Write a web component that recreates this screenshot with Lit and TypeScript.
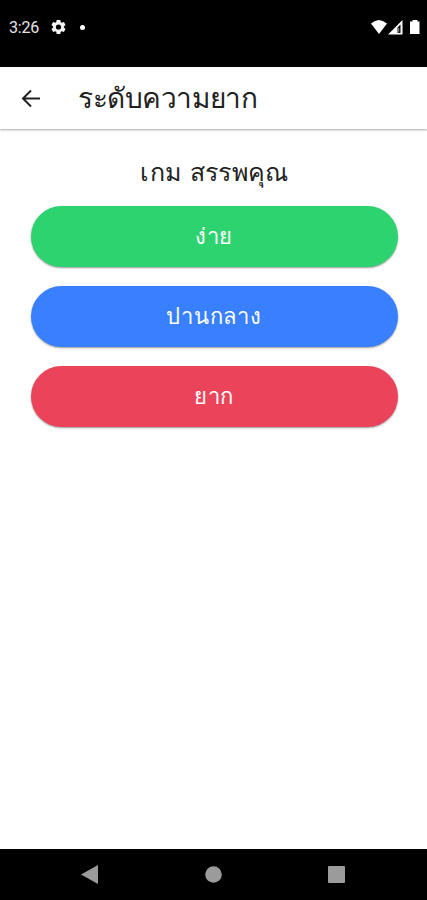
import { LitElement, html, css } from "lit";
import { customElement } from "lit/decorators.js";

interface Level { name: string; tone: string; }

@customElement("app-root")
export class AppRoot extends LitElement {
  static styles = css`
    :host { display: flex; flex-direction: column; width: 100%; height: 100vh; background: #fff; color: #222; overflow: hidden; font-family: "DejaVu Sans", sans-serif; }
    .status { height: 67px; flex: none; box-sizing: border-box; background: #000; color: #e6e6e6; display: flex; align-items: flex-start; padding: 19px 7px 0 9px; font: 400 16px/18px Roboto, sans-serif; }
    .time { width: 31px; letter-spacing: -0.2px; }
    svg { display: block; flex: none; }
    .gear { margin: 0 0 0 11px; }
    .dot { width: 5px; height: 5px; border-radius: 50%; background: #fff; margin: 6px 0 0 14px; }
    .signals { margin: 0 0 0 auto; }
    .bar { height: 62px; flex: none; display: flex; align-items: center; padding-left: 21px; box-shadow: 0 1px 2px rgba(0,0,0,.35); z-index: 1; }
    .bar h1 { margin: 2px 0 0 37px; font-weight: 400; font-size: 28px; line-height: 40px; letter-spacing: -0.42px; }
    main { flex: 1; padding: 24px 29px 0 31px; display: flex; flex-direction: column; }
    h2 { margin: 0 0 14px; text-align: center; font-weight: 400; font-size: 25px; line-height: 39px; letter-spacing: 0.35px; }
    button { height: 61px; flex: none; border: 0; border-radius: 31px; margin: 0 0 19px; padding: 0 1px 0 0; color: #fff; font: 400 22px/60px "DejaVu Sans", sans-serif; letter-spacing: 0.8px; box-shadow: 0 1px 2px rgba(0,0,0,.4); }
    .easy { background: #2dd36f; }
    .medium { background: #3880ff; }
    .hard { background: #eb445a; }
    nav { height: 51px; flex: none; box-sizing: border-box; padding: 0 82px 0 81px; background: #000; display: flex; align-items: center; justify-content: space-between; }
  `;
  private levels: Level[] = [
    { name: "ง่าย", tone: "easy" },
    { name: "ปานกลาง", tone: "medium" },
    { name: "ยาก", tone: "hard" },
  ];
  render() {
    return html`
      <div class="status"><span class="time">3:26</span>
        <svg class="gear" width="15" height="16" viewBox="0 0 15 16" fill="#f4f4f4"><path fill-rule="evenodd" d="M5.700 1h3.600l.5 2.200 1 .6 2.100-.7 1.600 2.800-1.600 1.500v1.200l1.600 1.500-1.600 2.800-2.100-.7-1 .6-.5 2.200H5.700l-.5-2.200-1-.6-2.100.7L.5 10.100l1.600-1.500V7.400L.5 5.900l1.600-2.800 2.100.7 1-.6zM7.500 5.400a2.600 2.600 0 1 0 0 5.200 2.600 2.600 0 0 0 0-5.200z"/></svg>
        <span class="dot"></span>
        <svg class="signals" width="49" height="16" viewBox="0 0 49 16" fill="#fff"><path d="M0 4.500Q7.700-2.500 16 4.500L8 15z"/><path fill-rule="evenodd" d="M17 15.500 31.500 1v14.500zM26.500 8.500v5.500h3V5.500z"/><path d="M27.200 9h1v4.500h-1z" fill="#999"/><path d="M39 2.500h2.500V1h5v1.500H48.500V15H39z"/></svg>
      </div>
      <header class="bar"><svg width="20" height="20" viewBox="0 0 20 20" fill="none" stroke="#222" stroke-width="2"><path d="M19 10.500H2M10 2.500 2 10.500l8 8"/></svg><h1>ระดับความยาก</h1></header>
      <main><h2>เกม สรรพคุณ</h2>${this.levels.map(l => html`<button class=${l.tone}>${l.name}</button>`)}</main>
      <nav>
        <svg width="17" height="19" viewBox="0 0 17 19" fill="#9b9b9b"><path d="M0 9.500 17 0v19z"/></svg>
        <svg width="17" height="17" viewBox="0 0 17 17" fill="#9b9b9b"><circle cx="8.500" cy="8.500" r="8.300"/></svg>
        <svg width="17" height="17" viewBox="0 0 17 17" fill="#9b9b9b"><rect width="17" height="17" rx="1"/></svg>
      </nav>`;
  }
}
